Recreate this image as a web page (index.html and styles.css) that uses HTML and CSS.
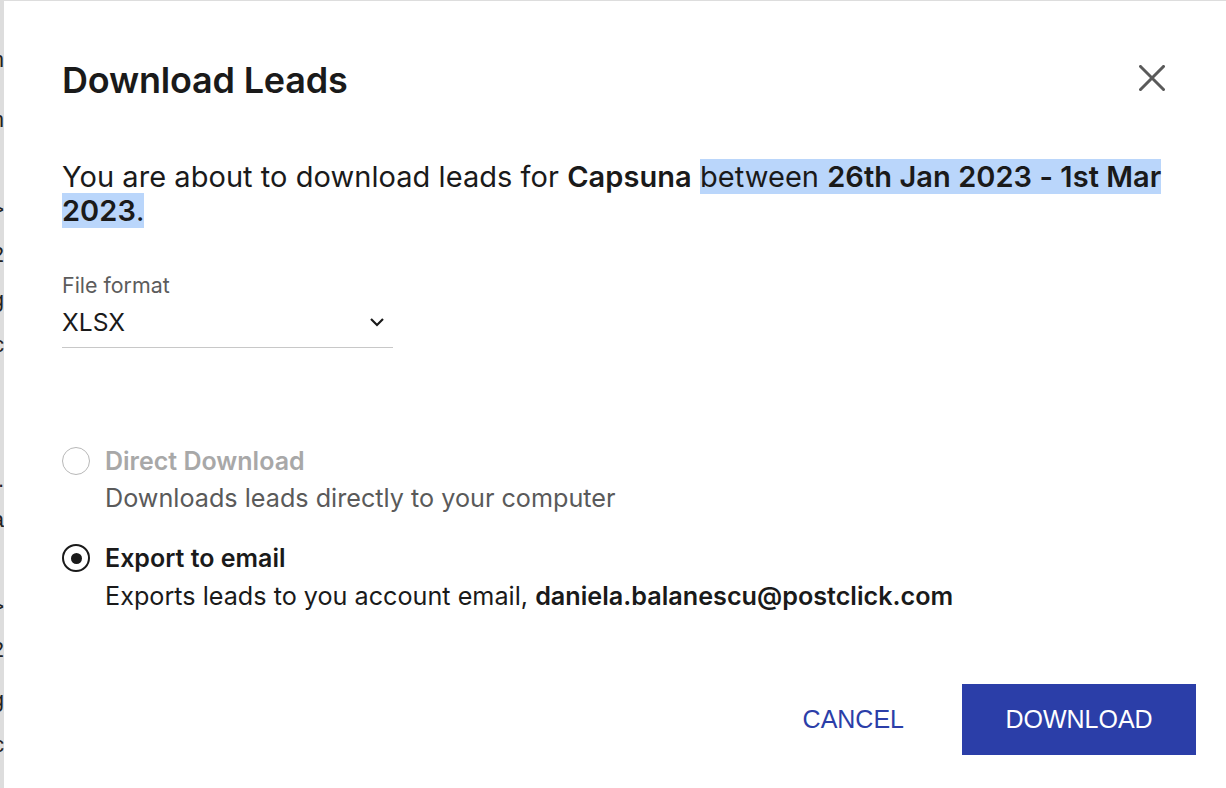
FILE: index.html
```html
<!DOCTYPE html>
<html lang="en">
<head>
<meta charset="utf-8">
<title>Download Leads</title>
<link rel="stylesheet" href="styles.css">
</head>
<body>
<div class="page">
  <div class="backdrop" aria-hidden="true">
    <div class="bg-line h60">on</div>
    <div class="bg-line h90">on</div>
    <div class="bg-line h45">&lt;</div>
    <div class="bg-line h45">2</div>
    <div class="bg-line h45">g</div>
    <div class="bg-line h135">c</div>
    <div class="bg-line h40">.</div>
    <div class="bg-line h87">a</div>
    <div class="bg-line h43">&lt;</div>
    <div class="bg-line h50">2</div>
    <div class="bg-line h45">g</div>
    <div class="bg-line h45">c</div>
  </div>
  <div class="dialog">
    <div class="dialog-header">
      <h1 class="title">Download Leads</h1>
      <button class="close" aria-label="Close">
        <svg width="26" height="26" viewBox="0 0 26 26"><path d="M1.5 1.5 L24.5 24.5 M24.5 1.5 L1.5 24.5" stroke="#5a5a5a" stroke-width="3" stroke-linecap="square"/></svg>
      </button>
    </div>
    <p class="intro">You are about to download leads for <b>Capsuna</b> <span class="sel">between <b>26th Jan 2023 - 1st Mar 2023</b>.</span></p>
    <div class="field">
      <div class="field-label">File format</div>
      <div class="select">
        <span>XLSX</span>
        <svg width="16" height="10" viewBox="0 0 16 10"><path d="M2 2 L8 8 L14 2" fill="none" stroke="#1a1a1a" stroke-width="2.2"/></svg>
      </div>
    </div>
    <div class="options">
      <div class="option disabled">
        <span class="radio"></span>
        <div class="option-text">
          <div class="option-title">Direct Download</div>
          <div class="option-desc">Downloads leads directly to your computer</div>
        </div>
      </div>
      <div class="option">
        <span class="radio checked"></span>
        <div class="option-text">
          <div class="option-title">Export to email</div>
          <div class="option-desc">Exports leads to you account email, <b>daniela.balanescu@postclick.com</b></div>
        </div>
      </div>
    </div>
    <div class="actions">
      <button class="btn-text">CANCEL</button>
      <button class="btn-primary">DOWNLOAD</button>
    </div>
  </div>
</div>
</body>
</html>
```
FILE: styles.css
```css
* { box-sizing: border-box; }
html, body { margin: 0; height: 100%; }
body {
  background: #dddddd;
  font-family: Inter, "Noto Sans", sans-serif;
  color: #1a1a1a;
  overflow: hidden;
}
.page {
  display: flex;
  height: 788px;
}
.backdrop {
  width: 4px;
  flex: none;
  overflow: hidden;
  direction: rtl;
  padding-top: 47px;
  font-family: "Liberation Sans", sans-serif;
  font-size: 22px;
  line-height: 26px;
  color: #222;
}
.bg-line { white-space: nowrap; text-align: left; }
.h40 { height: 40px; }
.h43 { height: 43px; }
.h45 { height: 45px; }
.h50 { height: 50px; }
.h60 { height: 60px; }
.h87 { height: 87px; }
.h90 { height: 90px; }
.h135 { height: 135px; }
.dialog {
  flex: 1;
  background: #fff;
  margin-top: 1px;
  padding: 57px 30px 33px 58px;
  display: flex;
  flex-direction: column;
}
.dialog-header {
  display: flex;
  justify-content: space-between;
  align-items: flex-start;
}
.title {
  margin: 0;
  font-size: 36px;
  font-weight: 600;
  line-height: 44px;
  letter-spacing: -0.2px;
}
.close {
  border: 0;
  background: none;
  padding: 0;
  margin: 7px 31px 0 0;
  width: 26px;
  height: 26px;
  cursor: pointer;
}
.close svg { display: block; }
.intro {
  margin: 58px 0 0;
  font-size: 29px;
  line-height: 34px;
  font-weight: 400;
  letter-spacing: 0.05px;
  max-width: 1110px;
}
.intro b { font-weight: 600; }
.sel { background: #bad6fb; }
.field {
  margin-top: 44px;
  width: 331px;
}
.field-label {
  font-size: 21.4px;
  line-height: 26px;
  color: #5c5c5c;
}
.select {
  display: flex;
  justify-content: space-between;
  align-items: center;
  font-size: 24.6px;
  line-height: 30px;
  padding: 9px 8px 10px 0;
  border-bottom: 1px solid #c8c8c8;
}
.select svg { display: block; }
.options {
  margin-top: 98px;
  display: flex;
  flex-direction: column;
  gap: 30px;
}
.option {
  display: flex;
  align-items: flex-start;
  gap: 15px;
}
.radio {
  width: 28px;
  height: 28px;
  border-radius: 50%;
  border: 2px solid #1a1a1a;
  flex: none;
  margin-top: 1px;
  display: flex;
  align-items: center;
  justify-content: center;
}
.radio.checked::after {
  content: "";
  width: 11px;
  height: 11px;
  border-radius: 50%;
  background: #1a1a1a;
}
.option.disabled .radio { border: 1px solid #b8b8b8; }
.option-title {
  font-size: 25px;
  font-weight: 600;
  line-height: 30px;
}
.option.disabled .option-title { color: #a8a8a8; }
.option-desc {
  margin-top: 7px;
  font-size: 25.2px;
  line-height: 30px;
  color: #5a5a5a;
}
.option:not(.disabled) .option-desc { color: #1a1a1a; margin-top: 8px; }
.option-desc b { font-weight: 600; }
.actions {
  margin-top: auto;
  display: flex;
  justify-content: flex-end;
  align-items: center;
  gap: 58px;
}
.btn-text, .btn-primary {
  font-family: "Liberation Sans", Arial, sans-serif;
  font-size: 25px;
  border: 0;
  cursor: pointer;
}
.btn-text {
  background: none;
  color: #2b3ea8;
  padding: 0;
}
.btn-primary {
  background: #2b3ea8;
  color: #fff;
  width: 234px;
  height: 71px;
}
```
